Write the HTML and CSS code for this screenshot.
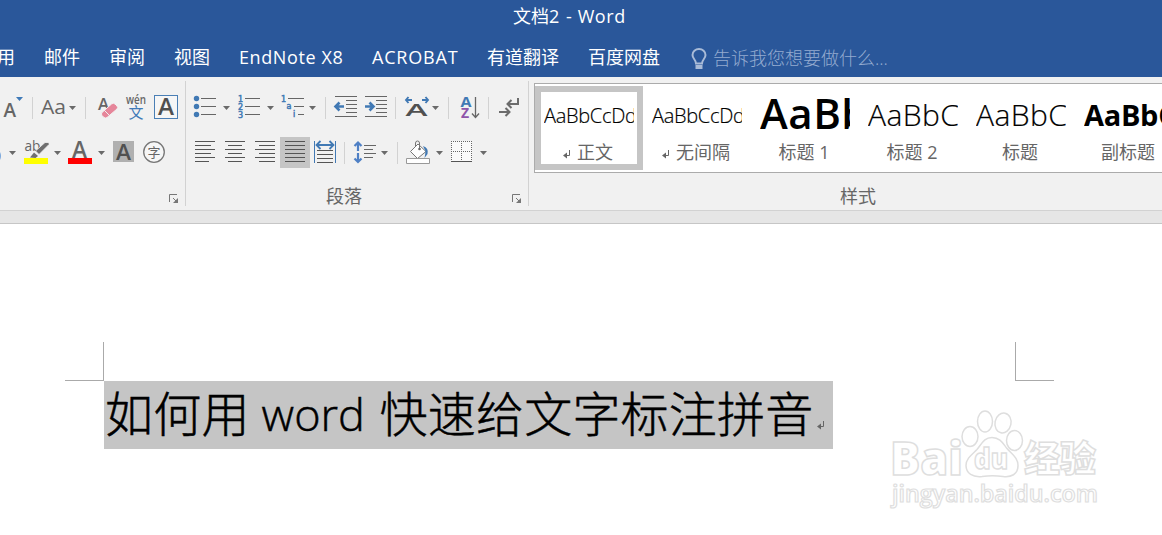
FILE: index.html
```html
<!DOCTYPE html>
<html lang="zh-CN">
<head>
  <meta charset="UTF-8">
  <meta name="viewport" content="width=device-width, initial-scale=1.0">
  <title>文档2 - Word</title>
  <link rel="stylesheet" href="styles.css">
</head>
<body>
  <svg class="defs" width="0" height="0">
    <symbol id="caret" viewBox="0 0 7 4" width="7" height="4"><path d="M0 0h7L3.5 4z" fill="#6a6a6a"/></symbol>
    <symbol id="launcher" viewBox="0 0 10 10" width="10" height="10"><path d="M.5 8V.5H8M4 4l4 4" fill="none" stroke="#777"/><path d="M9 4v5H4z" fill="#777"/></symbol>
    <symbol id="enter" viewBox="0 0 8 9" width="8" height="9"><path d="M6.500 0v5.500H2" fill="none" stroke="#666"/><path d="M0 5.500L4 2.500v6z" fill="#666"/></symbol>
  </svg>

  <header class="topbar">
    <h1 class="title">文档2 <span>- Word</span></h1>
    <nav class="tabs">
      <a class="tab cut">用</a>
      <a class="tab">邮件</a>
      <a class="tab">审阅</a>
      <a class="tab">视图</a>
      <a class="tab endnote">EndNote X8</a>
      <a class="tab acrobat">ACROBAT</a>
      <a class="tab">有道翻译</a>
      <a class="tab">百度网盘</a>
      <a class="tell">
        <svg width="16" height="22" fill="none" stroke="#a9bbd7" stroke-width="2"><path d="M5 15.500C5 11.500 1.500 11 1.500 7a6.500 6 0 0 1 13 0c0 4-3.500 4.500-3.500 8.500z"/><path d="M4.500 19h7" stroke-width="4"/></svg>
        <span>告诉我您想要做什么...</span>
      </a>
    </nav>
  </header>

  <section class="ribbon">
    <div class="group font-group">
      <div class="tools">
        <svg width="32" height="30"><text class="glyph" x="3.500" y="25" font-size="19">A</text><path d="M16 5h7l-3.500 4z" fill="#3f7ab8"/></svg>
        <i class="sep"></i>
        <svg width="52" height="30"><text class="glyph medium" x="8" y="22" font-size="20" textLength="25" lengthAdjust="spacingAndGlyphs">Aa</text><use href="#caret" x="36" y="14"/></svg>
        <i class="sep"></i>
        <svg width="34" height="30"><text class="glyph" x="12" y="18" font-size="17" textLength="11" lengthAdjust="spacingAndGlyphs">A</text><path d="M16 20.500L25.500 12q2-1.500 3.500 0l2 2q1.500 1.500 0 3L21 25.500q-1.500 1-3 0l-2-2q-1.200-1.500 0-3z" fill="#e6869a" stroke="#f1f1f1"/><path d="M18 18l6 6" stroke="#f1f1f1"/></svg>
        <svg width="30" height="30"><text class="glyph" x="6" y="12" font-size="12" textLength="20" lengthAdjust="spacingAndGlyphs">wén</text><text class="cjk" x="8.500" y="26" font-size="15" fill="#3f7ab8">文</text></svg>
        <svg width="35" height="30"><rect x="4.500" y="3.500" width="23" height="23" fill="#f6f6f6" stroke="#4a7fb5"/><text class="glyph dark" x="8" y="23" font-size="23" textLength="16" lengthAdjust="spacingAndGlyphs">A</text></svg>
      </div>
      <div class="tools">
        <svg width="20" height="30"><path d="M0 15q2 4 0 8z" fill="#7aa7dc"/><use href="#caret" x="9" y="14"/></svg>
        <svg width="44" height="30"><text class="glyph medium" x="4.500" y="13.500" font-size="14" textLength="16" lengthAdjust="spacingAndGlyphs">ab</text><path d="M15.500 14L25 5.500h4v2L19 17.500z" fill="#6f6f6f" stroke="#f1f1f1" stroke-width=".8"/><path d="M10 20.500l4-5 4 3.500-2.500 2z" fill="#6f6f6f"/><path d="M4 21h24v6H4z" fill="#ff0"/><use href="#caret" x="34" y="14"/></svg>
        <svg width="45" height="30"><text class="glyph" x="8" y="21" font-size="23" textLength="15" lengthAdjust="spacingAndGlyphs">A</text><path d="M4 21h24v6H4z" fill="red"/><use href="#caret" x="34" y="14"/></svg>
        <svg width="30" height="30"><path d="M4 4h21v21H4z" fill="#b0b0b0"/><text class="glyph dark" x="7" y="22.500" font-size="22" textLength="15" lengthAdjust="spacingAndGlyphs">A</text></svg>
        <svg width="40" height="30"><circle cx="15" cy="15" r="10.300" fill="#f6f6f6" stroke="#777" stroke-width="1.300"/><text class="cjk" x="8.500" y="20" font-size="13" fill="#666">字</text></svg>
      </div>
      <div class="group-foot"><svg width="10" height="10"><use href="#launcher"/></svg></div>
    </div>

    <div class="group para-group">
      <div class="tools">
        <svg width="49" height="30"><path d="M15 6.500h15M15 14.500h15M15 22.500h15" stroke="#666"/><g fill="#4179b4"><circle cx="10.500" cy="6.500" r="2.700"/><circle cx="10.500" cy="14.500" r="2.700"/><circle cx="10.500" cy="22.500" r="2.700"/></g><use href="#caret" x="37" y="14"/></svg>
        <svg width="44" height="30"><path d="M10 6.500h15M10 14.500h15M10 22.500h15" stroke="#666"/><g class="num" font-size="8"><text x="3" y="9.500">1</text><text x="3" y="17.500">2</text><text x="3" y="25.500">3</text></g><use href="#caret" x="32" y="14"/></svg>
        <svg width="46" height="30"><path d="M9 6.500h16M15 14.500h10M19 22.500h6" stroke="#666"/><g class="num" font-size="8"><text x="2" y="9.500">1</text><text x="7.500" y="17">a</text><text x="14" y="25">i</text></g><use href="#caret" x="30" y="14"/></svg>
        <i class="sep"></i>
        <svg width="34" height="30"><path d="M9 4.500h22M20 8.500h11M20 12.500h11M20 16.500h11M20 20.500h11M9 24.500h22" stroke="#666"/><path d="M18 14.500h-8M13.500 10.500l-4 4 4 4" fill="none" stroke="#4179b4" stroke-width="2.600"/></svg>
        <svg width="35" height="30"><path d="M5 4.500h22M16 8.500h11M16 12.500h11M16 16.500h11M16 20.500h11M5 24.500h22" stroke="#666"/><path d="M5 14.500h8M9.500 10.500l4 4-4 4" fill="none" stroke="#4179b4" stroke-width="2.600"/></svg>
        <i class="sep"></i>
        <svg width="52" height="30"><path d="M16 8H10.500M12.500 5L10 8l2.500 3M26 8h5.500M29.500 5L32 8l-2.500 3" fill="none" stroke="#4179b4" stroke-width="1.900"/><text class="glyph dark" x="9.500" y="23.500" font-size="17" textLength="22" lengthAdjust="spacingAndGlyphs">A</text><use href="#caret" x="36" y="14"/></svg>
        <i class="sep"></i>
        <svg width="39" height="30"><g class="az" font-size="15"><text x="11.500" y="15" fill="#4179b4" textLength="11" lengthAdjust="spacingAndGlyphs">A</text><text x="12" y="26" font-size="14" fill="#8e55aa">Z</text></g><path d="M26.500 5v20M23 21.500l3.500 4 3.500-4" fill="none" stroke="#666" stroke-width="1.300"/></svg>
        <i class="sep"></i>
        <svg width="39" height="30"><g fill="none" stroke="#6c6c6c" stroke-width="2"><path d="M29 6v6H19M22.500 8L18.500 12l4 4M10 20h10M16.500 16l4 4-4 4"/></g></svg>
      </div>
      <div class="tools">
        <svg width="34" height="30"><path d="M9 4.500h20M9 8.500h16M9 12.500h20M9 16.500h16M9 20.500h20M9 24.500h14" stroke="#555"/></svg>
        <svg width="30" height="30"><path d="M5 4.500h20M8 8.500h14M5 12.500h20M8 16.500h14M5 20.500h20M8 24.500h14" stroke="#555"/></svg>
        <svg width="30" height="30"><path d="M5 4.500h20M9 8.500h16M5 12.500h20M9 16.500h16M5 20.500h20M9 24.500h16" stroke="#555"/></svg>
        <svg class="active" width="30" height="31"><path d="M5 4.500h20M5 8.500h20M5 12.500h20M5 16.500h20M5 20.500h20M5 24.500h20" stroke="#555"/></svg>
        <svg width="34" height="30"><path d="M4.500 4v22M25.500 4v22" stroke="#4179b4"/><path d="M7 8h16M10.500 4L6.500 8l4 4M19.500 4l4 4-4 4" fill="none" stroke="#4179b4" stroke-width="1.800"/><path d="M7 13.500h16M7 17.500h16M7 21.500h16M7 25.500h16" stroke="#555"/></svg>
        <i class="sep"></i>
        <svg width="52" height="30"><path d="M13 14V6M9.500 9L13 5.500 16.500 9M13 16v8M9.500 21.500L13 25l3.500-3.500" fill="none" stroke="#4f80c5" stroke-width="2.200"/><path d="M19 8.500h12M19 12.500h9M19 16.500h12M19 20.500h9" stroke="#666"/><use href="#caret" x="36" y="14"/></svg>
        <i class="sep"></i>
        <svg width="49" height="30"><path d="M12.500 14.500L20 7l8 7.500-8.500 7z" fill="#fff" stroke="#777"/><path d="M17.500 10V6q0-2 2-2t2 2v6" fill="none" stroke="#777"/><circle cx="21.500" cy="12" r="1.300" fill="#666"/><path d="M25 9q6 2 4.500 8l-3 4q1-5 1-7z" fill="#4179b4"/><path d="M8.500 21.500h23v5h-23z" fill="#fff" stroke="#999"/><use href="#caret" x="38" y="14"/></svg>
        <svg width="50" height="30"><path d="M4 4h21v20H4z" fill="#fafafa"/><path d="M4 4.500h21M4 14.500h21M4.500 4v20M14.500 4v20M24.500 4v20" stroke="#666" stroke-dasharray="1 1"/><path d="M4 24.500h21" stroke="#555"/><use href="#caret" x="33" y="14"/></svg>
      </div>
      <div class="group-foot"><span>段落</span><svg width="10" height="10"><use href="#launcher"/></svg></div>
    </div>

    <div class="group style-group">
      <div class="gallery">
        <div class="style selected"><div class="preview">AaBbCcDd</div><div class="name"><svg width="8" height="9"><use href="#enter"/></svg>正文</div></div>
        <div class="style"><div class="preview">AaBbCcDd</div><div class="name"><svg width="8" height="9"><use href="#enter"/></svg>无间隔</div></div>
        <div class="style"><div class="preview h1">AaBb</div><div class="name">标题 1</div></div>
        <div class="style"><div class="preview h2">AaBbC</div><div class="name">标题 2</div></div>
        <div class="style"><div class="preview h2">AaBbC</div><div class="name">标题</div></div>
        <div class="style"><div class="preview sub">AaBbC</div><div class="name">副标题</div></div>
      </div>
      <div class="style-foot">样式</div>
    </div>
  </section>

  <main class="page">
    <div class="marks"><i class="mark left"></i><i class="mark right"></i></div>
    <p class="line">如何用<span class="latin">word</span>快速给文字标注拼音<svg width="8" height="9"><use href="#enter"/></svg></p>
    <svg class="watermark" width="220" height="110" viewBox="885 405 220 110">
      <g fill="#fff" stroke="#dedede" stroke-width="1.500">
        <text class="logo" x="890" y="475" font-size="46" textLength="73" lengthAdjust="spacingAndGlyphs">Bai</text>
        <ellipse cx="970" cy="436.500" rx="8" ry="10"/>
        <ellipse cx="985" cy="421.500" rx="7.500" ry="10.500"/>
        <ellipse cx="1003" cy="423" rx="8" ry="10" transform="rotate(12 1003 423)"/>
        <ellipse cx="1014.500" cy="440.500" rx="8" ry="10"/>
        <path d="M992 437.500c8 0 11 6 15 11 5 6 11 9 11 17 0 9-7 12-15 11-7-1-14-1-21 0-9 1-16-3-16-11 0-7 6-11 11-16 5-6 7-12 15-12z"/>
        <text class="logo" x="974" y="469" font-size="29" textLength="34" lengthAdjust="spacingAndGlyphs">du</text>
        <text class="logo" x="1024" y="472" font-size="36" textLength="72" lengthAdjust="spacingAndGlyphs">经验</text>
        <text class="url" x="892" y="502" font-size="23" stroke-width="1.200" textLength="206" lengthAdjust="spacingAndGlyphs">jingyan.baidu.com</text>
      </g>
    </svg>
  </main>
</body>
</html>
```
FILE: styles.css
```css
* {
  box-sizing: border-box;
}
body {
  margin: 0;
  height: 535px;
  overflow: hidden;
  background: #fff;
  font-family: "Open Sans", "Noto Sans CJK SC", sans-serif;
  font-size: 18px;
  color: #666;
}
svg {
  display: block;
  flex: none;
}
.defs {
  position: absolute;
}
.topbar {
  height: 77px;
  background: #2a579a;
  color: #fff;
}
.title {
  margin: 0;
  padding-left: 513px;
  height: 36px;
  line-height: 32px;
  font-size: 18px;
  font-weight: 400;
  white-space: pre;
}
.title span {
  letter-spacing: .6px;
  margin-left: 2px;
}
.tabs {
  display: flex;
  gap: 29px;
  margin-left: -3px;
  height: 41px;
  line-height: 42px;
  white-space: nowrap;
}
.endnote {
  width: 104px;
  letter-spacing: .6px;
}
.acrobat {
  width: 86px;
  letter-spacing: .8px;
}
.tell {
  display: flex;
  gap: 6px;
  padding-left: 2px;
  line-height: 44px;
  color: #94abd0;
  font-weight: 300;
}
.tell svg {
  margin-top: 12px;
}
.ribbon {
  display: flex;
  height: 147px;
  background: linear-gradient(#f1f1f1 133px, #d2d2d2 133px, #d2d2d2 134px, #e6e6e6 134px);
  border-bottom: 1px solid #c6c6c6;
}
.group {
  flex: none;
  height: 133px;
  padding-top: 15px;
}
.font-group {
  width: 186px;
  background: linear-gradient(#d2d2d2, #d2d2d2) right 4px / 1px 125px no-repeat;
}
.para-group {
  width: 343px;
  background: linear-gradient(#d2d2d2, #d2d2d2) right 4px / 1px 125px no-repeat;
}
.tools {
  display: flex;
  height: 30px;
  margin-bottom: 15px;
}
.sep {
  width: 1px;
  height: 22px;
  margin-top: 5px;
  background: #d2d2d2;
}
.active {
  background: #c5c5c5;
}
.glyph {
  font-weight: 600;
  fill: #666;
}
.glyph.dark {
  fill: #505050;
}
.glyph.medium {
  font-weight: 500;
}
.cjk {
  font-family: "Noto Sans CJK SC", sans-serif;
}
.num {
  font-family: "DejaVu Sans", sans-serif;
  fill: #4179b4;
  stroke: #4179b4;
  stroke-width: .5;
}
.az {
  font-weight: 700;
}
.group-foot {
  display: flex;
  justify-content: flex-end;
  padding-right: 7px;
  line-height: 24px;
}
.group-foot svg {
  margin-top: 12px;
}
.group-foot span {
  margin: 2px 150px 0 0;
}
.style-group {
  flex: 1;
  min-width: 0;
  padding: 6px 0 0 5px;
}
.gallery {
  display: flex;
  height: 90px;
  padding-top: 2px;
  overflow: hidden;
  background: #fff;
  border: 1px solid #ababab;
  border-right: 0;
}
.style {
  flex: none;
  width: 108px;
  height: 84px;
  padding: 0 9px;
}
.selected {
  padding: 0 3px;
  border: 6px solid #c5c5c5;
}
.preview {
  height: 52px;
  overflow: hidden;
  line-height: 60px;
  font-size: 20px;
  font-weight: 300;
  letter-spacing: -.3px;
  color: #000;
  white-space: nowrap;
  -webkit-text-stroke: .2px #000;
}
.name {
  display: flex;
  justify-content: center;
  align-items: center;
  gap: 6px;
  height: 26px;
  padding-right: 2px;
  white-space: pre;
}
.name svg {
  margin-top: 6px;
}
.selected .preview {
  height: 46px;
  line-height: 48px;
}
.preview.h1 {
  font-size: 42px;
  font-weight: 600;
  line-height: 54px;
  letter-spacing: .5px;
  -webkit-text-stroke: 0;
}
.preview.h2 {
  font-size: 30px;
  line-height: 58px;
  letter-spacing: .4px;
}
.preview.sub {
  font-size: 29px;
  font-weight: 700;
  line-height: 57px;
  -webkit-text-stroke: 0;
}
.style-foot {
  width: 648px;
  margin-top: 10px;
  text-align: center;
  line-height: 26px;
}
.page {
  position: relative;
  height: 311px;
  padding: 118px 0 0 65px;
}
.marks {
  display: flex;
  justify-content: space-between;
  width: 989px;
}
.mark {
  width: 39px;
  height: 39px;
  border: solid #aaa;
  border-width: 0 0 1px;
}
.mark.left {
  border-right-width: 1px;
}
.mark.right {
  border-left-width: 1px;
}
.line {
  display: flex;
  width: 729px;
  height: 68px;
  margin: 0 0 0 39px;
  padding-left: 1px;
  background: #c5c5c5;
  color: #000;
  font-size: 48px;
  line-height: 66px;
  font-weight: 300;
  letter-spacing: .2px;
  white-space: nowrap;
  -webkit-text-stroke: .5px #000;
}
.latin {
  width: 118px;
  margin: 0 0 0 12px;
  font-size: 45px;
  letter-spacing: 0;
}
.line svg {
  margin: 40px 0 0 4px;
}
.watermark {
  position: absolute;
  left: 885px;
  top: 181px;
}
.logo {
  font-weight: 800;
}
.url {
  font-weight: 600;
}
```
